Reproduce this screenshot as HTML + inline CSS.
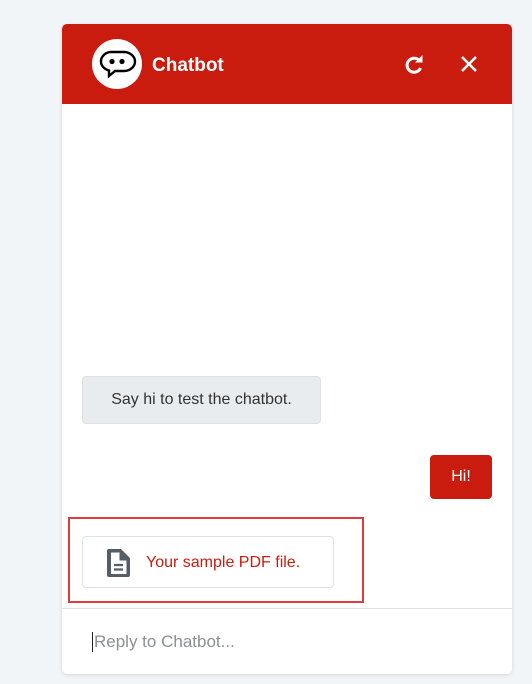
<!DOCTYPE html>
<html><head><style>
body{margin:0;width:532px;height:684px;background:#f2f5f8;font-family:"Liberation Sans",sans-serif;position:relative;overflow:hidden}
.card{position:absolute;left:62px;top:24px;width:450px;height:650px;background:#fff;border-radius:5px;box-shadow:0 1px 4px rgba(0,0,0,.12);overflow:hidden}
.hdr{height:80px;background:#c91c0e;position:relative}
.logo{position:absolute;left:30px;top:15px;width:50px;height:50px;border-radius:50%;background:#fff}
.title{position:absolute;left:90px;top:31px;color:#fff;font-weight:bold;font-size:19px}
.b1{position:absolute;left:20px;top:352px;width:237px;height:46px;background:#e9ecef;border:1px solid #dde1e5;border-radius:4px;font-size:16px;color:#333;line-height:46px;text-align:center}
.b2{position:absolute;left:368px;top:431px;width:62px;height:44px;background:#c91c0e;border-radius:4px;color:#fff;font-size:16px;line-height:44px;text-align:center}
.out{position:absolute;left:6px;top:493px;width:292px;height:82px;border:2px solid #e23b3b}
.pdf{position:absolute;left:20px;top:512px;width:250px;height:50px;border:1px solid #dee2e6;border-radius:4px}
.pdf span{position:absolute;left:63px;top:17px;color:#c91c0e;font-size:16px}
.sep{position:absolute;left:0;top:584px;width:450px;height:1px;background:#dee2e6}
.ph{position:absolute;left:30px;top:608px;color:#8a9096;font-size:17px;border-left:1px solid #222;padding-left:1px;line-height:20px}
</style></head><body>
<div class="card">
<div class="hdr">
<div class="logo"><svg width="50" height="50" viewBox="0 0 50 50"><path d="M18 13h14a11 9.5 0 0 1 0 19h-9l-6 5v-5.5a11 9.5 0 0 1 1-18.5z" fill="none" stroke="#000" stroke-width="2.4"/><circle cx="20" cy="22.5" r="2.6"/><circle cx="30" cy="22.5" r="2.6"/></svg></div>
<div class="title">Chatbot</div>
<svg style="position:absolute;left:341px;top:30px" width="22" height="22" viewBox="0 0 22 22"><path d="M17 7.5A7 7 0 1 0 17.5 14" fill="none" stroke="#fff" stroke-width="3"/><path d="M12 8.5h7.5V1z" fill="#fff"/></svg>
<svg style="position:absolute;left:398px;top:31px" width="18" height="18" viewBox="0 0 18 18"><path d="M2 2L16 16M16 2L2 16" stroke="#fff" stroke-width="2.6"/></svg>
</div>
<div class="b1">Say hi to test the chatbot.</div>
<div class="b2">Hi!</div>
<div class="out"></div>
<div class="pdf"><svg style="position:absolute;left:23px;top:11px" width="25" height="30" viewBox="0 0 25 30"><path d="M3 1h12l9 9v17a2 2 0 0 1-2 2H3a2 2 0 0 1-2-2V3a2 2 0 0 1 2-2z" fill="#565e64"/><path d="M5 4.5h8.5v8h7V26H5z" fill="#fff"/><path d="M8 17h9M8 21.5h9" stroke="#565e64" stroke-width="2.2"/></svg><span>Your sample PDF file.</span></div>
<div class="sep"></div>
<div class="ph">Reply to Chatbot...</div>
</div>
</body></html>
